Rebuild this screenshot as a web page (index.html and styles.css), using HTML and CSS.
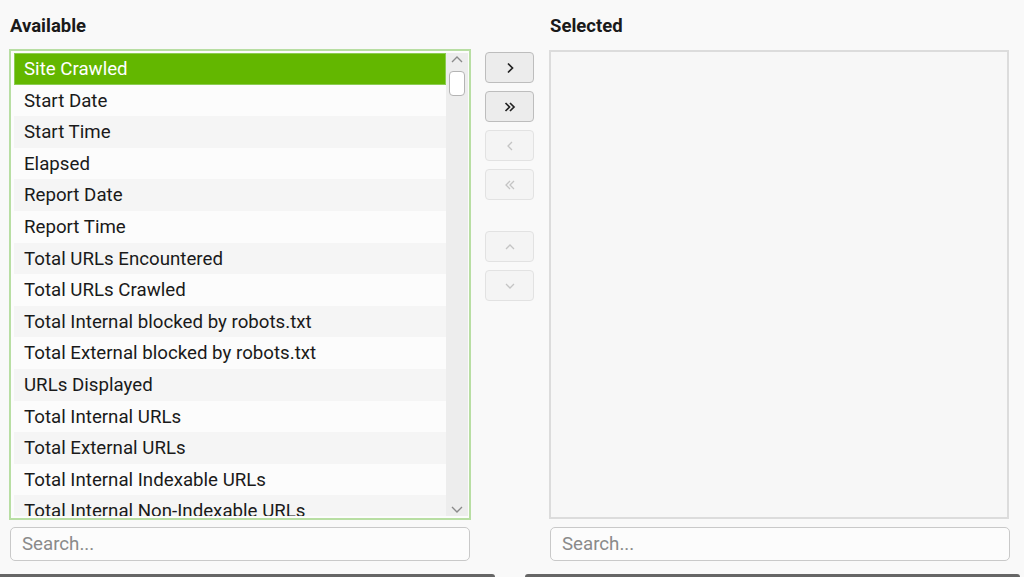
FILE: index.html
```html
<!DOCTYPE html>
<html lang="en">

<head>
    <meta charset="UTF-8">
    <meta name="viewport" content="width=device-width, initial-scale=1.0">
    <title>Columns</title>
    <link rel="stylesheet" href="styles.css">
</head>

<body>
    <div class="chooser">
        <div class="column left">
            <div class="label">Available</div>
            <div class="listbox">
                <div class="rows">
                    <div class="row selected">Site Crawled</div>
                    <div class="row">Start Date</div>
                    <div class="row">Start Time</div>
                    <div class="row">Elapsed</div>
                    <div class="row">Report Date</div>
                    <div class="row">Report Time</div>
                    <div class="row">Total URLs Encountered</div>
                    <div class="row">Total URLs Crawled</div>
                    <div class="row">Total Internal blocked by robots.txt</div>
                    <div class="row">Total External blocked by robots.txt</div>
                    <div class="row">URLs Displayed</div>
                    <div class="row">Total Internal URLs</div>
                    <div class="row">Total External URLs</div>
                    <div class="row">Total Internal Indexable URLs</div>
                    <div class="row">Total Internal Non-Indexable URLs</div>
                </div>
                <div class="scrollbar">
                    <svg class="arrow" width="14" height="10" viewBox="0 0 14 10"><path d="M2 7 L7 2 L12 7" fill="none" stroke="#8a8a8a" stroke-width="1.4"/></svg>
                    <div class="thumb"></div>
                    <div class="track"></div>
                    <svg class="arrow" width="14" height="10" viewBox="0 0 14 10"><path d="M2 3 L7 8 L12 3" fill="none" stroke="#8a8a8a" stroke-width="1.4"/></svg>
                </div>
            </div>
            <input class="search" type="text" placeholder="Search...">
        </div>

        <div class="column middle">
            <button class="btn"><svg width="14" height="14" viewBox="0 0 14 14"><path d="M5 2.5 L9.5 7 L5 11.5" fill="none" stroke="#222" stroke-width="1.7"/></svg></button>
            <button class="btn"><svg width="14" height="14" viewBox="0 0 14 14"><path d="M2.5 3 L6.5 7 L2.5 11 M7 3 L11 7 L7 11" fill="none" stroke="#222" stroke-width="1.7"/></svg></button>
            <button class="btn off"><svg width="14" height="14" viewBox="0 0 14 14"><path d="M9 3 L5 7 L9 11" fill="none" stroke="#c4c4c4" stroke-width="1.3"/></svg></button>
            <button class="btn off"><svg width="14" height="14" viewBox="0 0 14 14"><path d="M7 3 L3 7 L7 11 M11 3 L7 7 L11 11" fill="none" stroke="#c4c4c4" stroke-width="1.3"/></svg></button>
            <button class="btn off spaced"><svg width="14" height="14" viewBox="0 0 14 14"><path d="M3 9 L7 5 L11 9" fill="none" stroke="#c4c4c4" stroke-width="1.3"/></svg></button>
            <button class="btn off"><svg width="14" height="14" viewBox="0 0 14 14"><path d="M3 5 L7 9 L11 5" fill="none" stroke="#c4c4c4" stroke-width="1.3"/></svg></button>
        </div>

        <div class="column right">
            <div class="label">Selected</div>
            <div class="selectedbox"></div>
            <input class="search" type="text" placeholder="Search...">
        </div>
    </div>

    <div class="footer">
        <div class="bar"></div>
        <div class="bar wide"></div>
    </div>
</body>

</html>
```

FILE: styles.css
```css
body {
    font-family: Roboto, 'Liberation Sans', sans-serif;
    background: #f9f9f9;
    margin: 0;
    color: #1a1a1a;
    overflow: hidden;
}

.chooser {
    display: flex;
    padding-left: 9px;
}

.column {
    display: flex;
    flex-direction: column;
}

.left {
    width: 462px;
}

.middle {
    width: 49px;
    margin-left: 14px;
    padding-top: 52px;
    gap: 8px;
}

.right {
    width: 460px;
    margin-left: 15px;
}

.label {
    height: 49px;
    font-size: 18.5px;
    font-weight: bold;
    line-height: 24px;
    padding-top: 14px;
    box-sizing: border-box;
    padding-left: 1px;
}

.right .label {
    height: 50px;
}

.listbox {
    display: flex;
    height: 471px;
    box-sizing: border-box;
    border: 2px solid #b8dea3;
    padding: 2px 1px 2px 3px;
    background: #fcfcfc;
}

.rows {
    flex: 1;
    overflow: hidden;
}

.row {
    height: 31.6px;
    line-height: 32px;
    font-size: 18.7px;
    padding-left: 10px;
    white-space: nowrap;
}

.row:nth-child(odd) {
    background: #f5f5f5;
}

.row:nth-child(even) {
    background: #fcfcfc;
}

.row.selected {
    background: #63b700;
    color: #fff;
    box-shadow: inset 0 0 0 1px #8ccc52;
}

.scrollbar {
    width: 22px;
    background: #ededed;
    display: flex;
    flex-direction: column;
    align-items: center;
}

.arrow {
    margin: 2px 0;
    flex-shrink: 0;
}

.thumb {
    width: 16px;
    height: 25px;
    box-sizing: border-box;
    background: #fff;
    border: 1px solid #b4b4b4;
    border-radius: 4px;
    margin-top: 4px;
}

.track {
    flex: 1;
}

.btn {
    width: 49px;
    height: 31px;
    padding: 0;
    border: 1px solid #bdbdbd;
    border-radius: 4px;
    background: #ececec;
    display: flex;
    align-items: center;
    justify-content: center;
}

.btn.off {
    background: #f4f4f4;
    border-color: #e2e2e2;
}

.btn.spaced {
    margin-top: 23px;
}

.selectedbox {
    height: 469px;
    box-sizing: border-box;
    border: 2px solid #dcdcdc;
    background: #f7f7f7;
}

.search {
    margin-top: 7px;
    height: 34px;
    box-sizing: border-box;
    border: 1px solid #c9c9c9;
    border-radius: 5px;
    background: #fcfcfc;
    font-family: Roboto, 'Liberation Sans', sans-serif;
    font-size: 18.7px;
    padding: 0 11px;
    outline: none;
}

.left .search {
    margin-left: 1px;
    width: 460px;
}

.right .search {
    margin-top: 8px;
    width: 460px;
    margin-left: 1px;
}

.search::placeholder {
    color: #8a8a8a;
}

.footer {
    display: flex;
    margin-top: 13px;
}

.bar {
    width: 495px;
    height: 4px;
    background: #666;
    border-radius: 0 3px 0 0;
}

.bar.wide {
    margin-left: 30px;
    width: 495px;
    border-radius: 3px 3px 0 0;
}
```
